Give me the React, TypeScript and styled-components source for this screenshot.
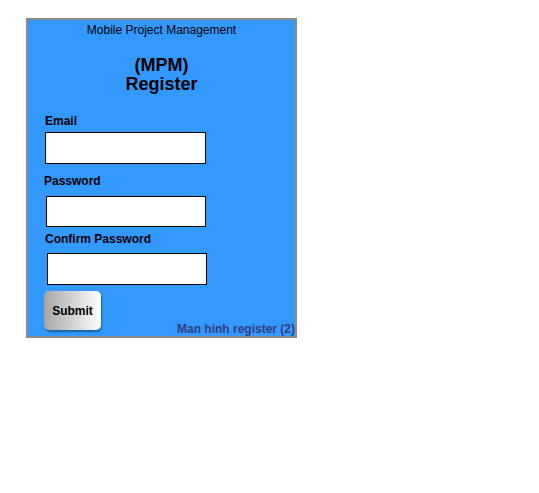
import React from "react";
import styled, { createGlobalStyle } from "styled-components";

const Global = createGlobalStyle`
  html, body { margin: 0; padding: 0; background: #ffffff; }
  body { font-family: "Liberation Sans", Arial, sans-serif; }
`;

const Panel = styled.div`
  margin: 18px 0 0 26px;
  width: 267px;
  height: 316px;
  border: 2px solid #8a8a8a;
  background: #3399ff;
  display: flex;
  flex-direction: column;
  font-family: "Liberation Sans", Arial, sans-serif;
  color: #000;
`;

const AppName = styled.div`
  padding-top: 3px;
  font-size: 12px;
  line-height: 14px;
  text-align: center;
`;

const Title = styled.h1`
  margin: 19px 0 0 0;
  font-size: 18px;
  line-height: 19px;
  font-weight: bold;
  text-align: center;
`;

const Form = styled.form`
  display: flex;
  flex-direction: column;
  align-items: flex-start;
  padding-left: 17px;
  margin-top: 20px;
`;

const Label = styled.label<{ $top: number; $indent: number }>`
  margin-top: ${(p) => p.$top}px;
  margin-left: ${(p) => p.$indent}px;
  font-size: 12px;
  line-height: 14px;
  font-weight: bold;
`;

const Input = styled.input<{ $top: number; $indent: number; $h: number; $w: number }>`
  margin: ${(p) => p.$top}px 0 0 ${(p) => p.$indent}px;
  box-sizing: border-box;
  width: ${(p) => p.$w}px;
  height: ${(p) => p.$h}px;
  border: 1px solid #000;
  background: #fff;
  padding: 0 4px;
  outline: none;
`;

const Footer = styled.div`
  flex: 1;
  display: flex;
  justify-content: space-between;
  align-items: flex-start;
  padding: 6px 0 0 16px;
`;

const SubmitButton = styled.button`
  box-sizing: border-box;
  width: 57px;
  height: 39px;
  border: none;
  border-radius: 5px;
  background: linear-gradient(to right, #a6a6a6, #ffffff);
  box-shadow: 1px 2px 2px #1f5e9e;
  font-family: "Liberation Sans", Arial, sans-serif;
  font-size: 12px;
  font-weight: bold;
  color: #000;
  padding: 0;
  cursor: pointer;
`;

const Caption = styled.div`
  align-self: flex-end;
  font-size: 12px;
  line-height: 14px;
  font-weight: bold;
  color: #333d80;
`;

export default function App() {
  return (
    <>
      <Global />
      <Panel>
        <AppName>Mobile Project Management</AppName>
        <Title>
          (MPM)
          <br />
          Register
        </Title>
        <Form onSubmit={(e) => e.preventDefault()}>
          <Label $top={0} $indent={0}>Email</Label>
          <Input $top={4} $indent={0} $h={32} $w={161} type="email" />
          <Label $top={10} $indent={-1}>Password</Label>
          <Input $top={8} $indent={1} $h={31} $w={160} type="password" />
          <Label $top={5} $indent={0}>Confirm Password</Label>
          <Input $top={7} $indent={2} $h={32} $w={160} type="password" />
        </Form>
        <Footer>
          <SubmitButton type="button">Submit</SubmitButton>
          <Caption>Man hinh register (2)</Caption>
        </Footer>
      </Panel>
    </>
  );
}
